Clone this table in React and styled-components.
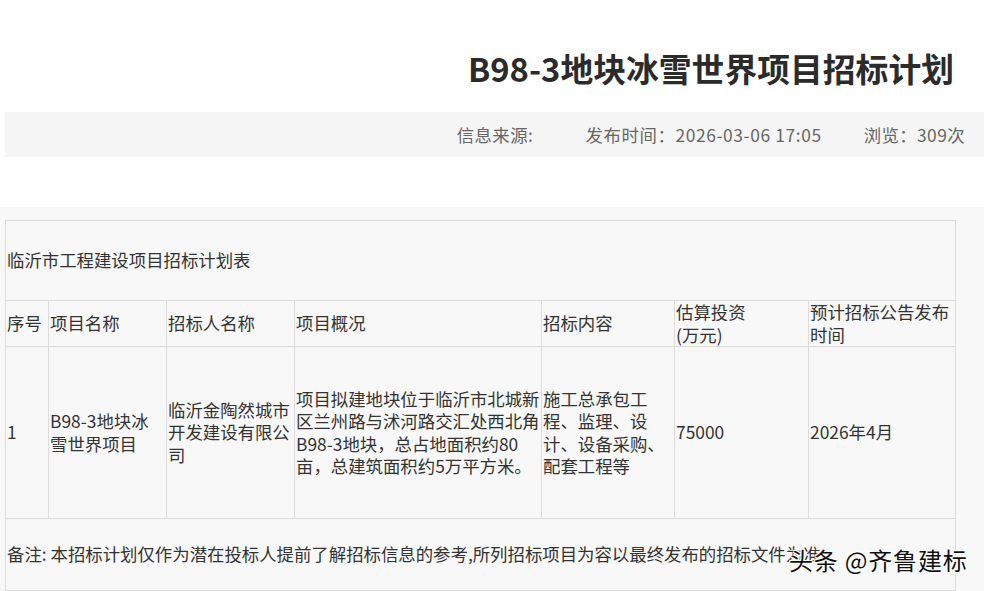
import React from 'react';
import styled, { createGlobalStyle } from 'styled-components';

const GlobalStyle = createGlobalStyle`
  html, body {
    margin: 0;
    padding: 0;
    background: #fff;
  }
  body {
    font-family: "Noto Sans CJK SC", "Noto Sans", sans-serif;
    color: #333;
  }
`;

const Page = styled.div`
  position: relative;
  width: 984px;
  height: 591px;
  overflow: hidden;
`;

const Title = styled.h1`
  margin: 0;
  height: 112px;
  display: flex;
  align-items: center;
  justify-content: flex-end;
  padding: 22px 30px 0 0;
  box-sizing: border-box;
  font-size: 32.8px;
  font-weight: 700;
  color: #2b2b2b;
`;

const MetaBar = styled.div`
  margin-left: 5px;
  height: 45px;
  background: #f5f5f5;
  display: flex;
  align-items: center;
  justify-content: flex-end;
  padding-right: 19px;
  font-size: 17.4px;
  color: #666;
`;

const MetaItem = styled.span`
  margin-left: ${(p) => p.$gap || 0}px;
  letter-spacing: ${(p) => p.$spacing || 0}px;
  white-space: pre;
`;

const Section = styled.section`
  margin-top: 50px;
  background: #f8f8f8;
  padding: 13px 0 0 5px;
  height: 400px;
`;

const Table = styled.table`
  width: 950px;
  border-collapse: collapse;
  table-layout: fixed;
  font-size: 17.4px;
  line-height: 22.6px;
  color: #333;
`;

const Row = styled.tr`
  height: ${(p) => p.$h}px;
`;

const Cell = styled.td`
  border: 1px solid #dcdcdc;
  padding: 0 1px;
  vertical-align: middle;
  text-align: left;
  line-break: strict;
`;

const Watermark = styled.div`
  position: absolute;
  left: 789px;
  top: 545px;
  font-size: 24px;
  line-height: 30px;
  letter-spacing: 0.8px;
  color: #111;
  white-space: nowrap;
  text-shadow: 0 0 2px #fff, 1px 1px 0 #fff, -1px -1px 0 #fff, 1px -1px 0 #fff, -1px 1px 0 #fff;
`;

const widths = [43, 118, 128, 247, 133, 134, 147];

const App = () => (
  <Page>
    <GlobalStyle />
    <Title>B98-3地块冰雪世界项目招标计划</Title>
    <MetaBar>
      <MetaItem $spacing={0.4}>信息来源: </MetaItem>
      <MetaItem $gap={48} $spacing={0.6}>发布时间：2026-03-06 17:05</MetaItem>
      <MetaItem $gap={42} $spacing={0.4}>浏览：309次</MetaItem>
    </MetaBar>
    <Section>
      <Table>
        <colgroup>
          {widths.map((w, i) => (
            <col key={i} style={{ width: w }} />
          ))}
        </colgroup>
        <tbody>
          <Row $h={80}>
            <Cell colSpan={7}>临沂市工程建设项目招标计划表</Cell>
          </Row>
          <Row $h={45}>
            <Cell>序号</Cell>
            <Cell>项目名称</Cell>
            <Cell>招标人名称</Cell>
            <Cell>项目概况</Cell>
            <Cell>招标内容</Cell>
            <Cell>
              估算投资
              <br />
              (万元)
            </Cell>
            <Cell>预计招标公告发布时间</Cell>
          </Row>
          <Row $h={172}>
            <Cell>1</Cell>
            <Cell>B98-3地块冰雪世界项目</Cell>
            <Cell>临沂金陶然城市开发建设有限公司</Cell>
            <Cell>项目拟建地块位于临沂市北城新区兰州路与沭河路交汇处西北角B98-3地块，总占地面积约80亩，总建筑面积约5万平方米。</Cell>
            <Cell>施工总承包工程、监理、设计、设备采购、配套工程等</Cell>
            <Cell>75000</Cell>
            <Cell>2026年4月</Cell>
          </Row>
          <Row $h={72}>
            <Cell colSpan={7}>备注: 本招标计划仅作为潜在投标人提前了解招标信息的参考,所列招标项目为容以最终发布的招标文件为准</Cell>
          </Row>
        </tbody>
      </Table>
    </Section>
    <Watermark>头条 @齐鲁建标</Watermark>
  </Page>
);

export default App;
